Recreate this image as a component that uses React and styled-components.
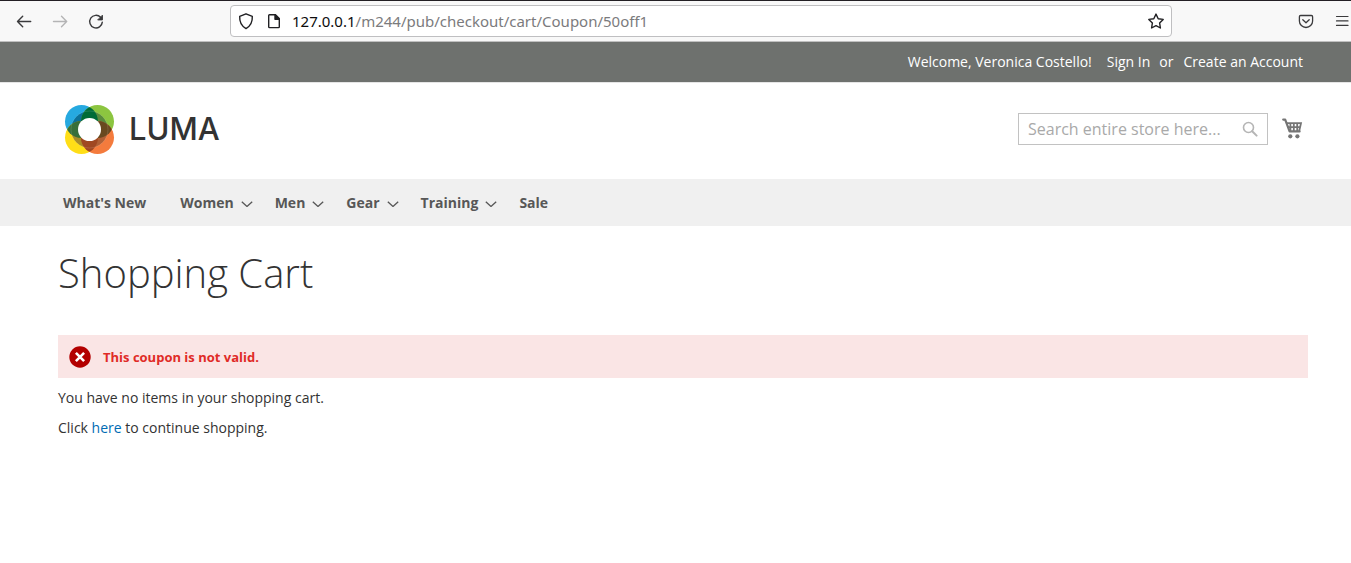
import React from 'react'
import styled, { createGlobalStyle } from 'styled-components'

const GlobalStyle = createGlobalStyle`
  * {
    box-sizing: border-box;
  }

  body {
    margin: 0;
    background: #ffffff;
    color: #333333;
    font-family: 'Open Sans', 'Noto Sans', sans-serif;
    font-size: 14px;
    line-height: 20px;
  }
`

const Toolbar = styled.header`
  display: flex;
  align-items: center;
  height: 42px;
  padding: 0 0 0 14px;
  background: #f8f8f8;
  border-top: 1px solid #231f24;
  border-bottom: 1px solid #c0c0c0;
`

const ToolbarGroup = styled.div`
  display: flex;
  gap: 16px;
  width: ${props => props.$width};
  justify-content: ${props => props.$end ? 'flex-end' : 'flex-start'};
`

const IconButton = styled.button`
  display: flex;
  flex: none;
  padding: 0;
  border: 0;
  background: none;
  color: ${props => props.$color || '#3a3a3c'};
  cursor: pointer;
`

const AddressBar = styled.div`
  display: flex;
  flex: 1;
  align-items: center;
  gap: 8px;
  height: 32px;
  padding: 0 5px;
  background: #ffffff;
  border: 1px solid #bfbfc1;
  border-radius: 4px;
  color: #202023;
`

const Address = styled.div`
  flex: 1;
  color: #7b7b7d;
  font-family: 'Noto Sans', sans-serif;
  font-size: 15px;
  white-space: nowrap;
  outline: none;
`

const Host = styled.span`
  color: #0c0c0d;
`

const Panel = styled.div`
  display: flex;
  justify-content: flex-end;
  height: 41px;
  padding: 10px 48px 0 58px;
  background: #6e716e;
  border-bottom: 1px solid #e5e5e5;
  color: #ffffff;
`

const PanelLink = styled.a`
  margin-left: ${props => props.$gap};
  color: #ffffff;
  text-decoration: none;
`

const PanelText = styled.span`
  margin-left: 9px;
`

const StoreHeader = styled.div`
  display: flex;
  align-items: center;
  justify-content: space-between;
  height: 96px;
  padding: 0 48px 4px 64px;
`

const Logo = styled.a`
  display: flex;
  align-items: center;
  gap: 14px;
  color: #333333;
  font-family: Inter, sans-serif;
  font-size: 31px;
  font-weight: 500;
  line-height: 50px;
  text-decoration: none;
`

const HeaderTools = styled.div`
  display: flex;
  align-items: center;
  gap: 13px;
`

const Search = styled.form`
  display: flex;
  align-items: center;
  width: 250px;
  height: 32px;
  padding: 0 9px;
  border: 1px solid #c2c2c2;
`

const SearchInput = styled.input`
  flex: 1;
  min-width: 0;
  padding: 0;
  border: 0;
  outline: 0;
  background: none;
  color: #333333;
  font-family: inherit;
  font-size: 16px;

  &::placeholder {
    color: #a9a9a9;
    opacity: 1;
  }
`

const Nav = styled.nav`
  display: flex;
  align-items: center;
  gap: 22px;
  height: 47px;
  padding: 0 58px 0 63px;
  background: #f0f0f0;
`

const NavLink = styled.a`
  display: flex;
  align-items: center;
  gap: 7px;
  padding-right: ${props => props.$spaced ? '12px' : '0'};
  color: #575757;
  font-weight: 700;
  text-decoration: none;
`

const Main = styled.main`
  padding: 19px 43px 40px 58px;
`

const Title = styled.h1`
  margin: 0 0 35px;
  font-size: 40px;
  font-weight: 300;
  line-height: 55px;
`

const Message = styled.div`
  display: flex;
  align-items: center;
  gap: 12px;
  min-height: 43px;
  margin-bottom: 10px;
  padding: 0 11px;
  background: #fae5e5;
  color: #e02b27;
  font-size: 13px;
  font-weight: 700;
  line-height: 18px;
`

const Paragraph = styled.p`
  margin: 0 0 10px;
`

const Link = styled.a`
  color: #006bb4;
  text-decoration: none;
`

const categories = [
  { title: "What's New" },
  { title: 'Women', menu: true },
  { title: 'Men', menu: true },
  { title: 'Gear', menu: true },
  { title: 'Training', menu: true },
  { title: 'Sale' },
]

// 20px line icon shared by the browser toolbar
const Icon = ({ children, size = 20 }) => (
  <svg
    width={size}
    height={size}
    viewBox="0 0 20 20"
    fill="none"
    stroke="currentColor"
    strokeWidth="1.4"
    strokeLinecap="round"
    strokeLinejoin="round"
    aria-hidden="true">
    {children}
  </svg>
)

const LumaMark = () => (
  <svg width="51" height="51" viewBox="0 0 51 51" aria-hidden="true">
    <defs>
      <clipPath id="blue"><circle cx="17.5" cy="17.5" r="16.5" /></clipPath>
      <clipPath id="green"><circle cx="33.5" cy="17.5" r="16.5" /></clipPath>
      <clipPath id="yellow"><circle cx="17.5" cy="33.5" r="16.5" /></clipPath>
      <clipPath id="orange"><circle cx="33.5" cy="33.5" r="16.5" /></clipPath>
    </defs>
    <circle cx="17.5" cy="17.5" r="16.5" fill="#26a9e0" />
    <circle cx="33.5" cy="17.5" r="16.5" fill="#8cc540" />
    <circle cx="17.5" cy="33.5" r="16.5" fill="#ffde17" />
    <circle cx="33.5" cy="33.5" r="16.5" fill="#f47b3d" />
    <circle cx="25.5" cy="25.5" r="18.5" fill="#0b7199" clipPath="url(#blue)" />
    <circle cx="25.5" cy="25.5" r="18.5" fill="#588b3c" clipPath="url(#green)" />
    <circle cx="25.5" cy="25.5" r="18.5" fill="#a98d2a" clipPath="url(#yellow)" />
    <circle cx="25.5" cy="25.5" r="18.5" fill="#b06036" clipPath="url(#orange)" />
    <circle cx="33.5" cy="17.5" r="16.5" fill="#006b37" clipPath="url(#blue)" />
    <circle cx="17.5" cy="33.5" r="16.5" fill="#376f3a" clipPath="url(#blue)" />
    <circle cx="33.5" cy="33.5" r="16.5" fill="#69491f" clipPath="url(#green)" />
    <circle cx="33.5" cy="33.5" r="16.5" fill="#a04822" clipPath="url(#yellow)" />
    <circle cx="25.5" cy="25.5" r="18.5" fill="none" stroke="#ffffff" strokeOpacity="0.25" strokeWidth="0.5" />
    <circle cx="25.5" cy="25.5" r="11.5" fill="#ffffff" />
  </svg>
)

const SearchIcon = () => (
  <svg width="16" height="16" viewBox="0 0 16 16" fill="none" stroke="#b5b5b5" aria-hidden="true">
    <circle cx="6.5" cy="6.5" r="5" strokeWidth="1.6" />
    <path d="M10.2 10.2 14.6 14.6" strokeWidth="2" strokeLinecap="round" />
  </svg>
)

const CartIcon = () => (
  <svg width="22" height="24" viewBox="0 0 22 24" fill="none" stroke="#757575" aria-hidden="true">
    <path d="M2.2 2.6H4.2L8.6 14.4H18.6" strokeWidth="2.2" strokeLinecap="round" strokeLinejoin="round" />
    <path d="M5 6.2H20L18.2 14M6 10.2H19.2M9.4 6V14M12.8 6V14M16.2 6V14" strokeWidth="1.8" />
    <circle cx="9.3" cy="19.3" r="2.1" fill="#757575" stroke="none" />
    <circle cx="16.4" cy="19.3" r="2.1" fill="#757575" stroke="none" />
  </svg>
)

const Chevron = () => (
  <svg width="12" height="8" viewBox="0 0 12 8" fill="none" stroke="#575757" aria-hidden="true">
    <path d="M.8 2.7 6 7.5 11.2 2.7" strokeWidth="1.3" />
  </svg>
)

const ErrorIcon = () => (
  <svg width="22" height="22" viewBox="0 0 22 22" aria-hidden="true">
    <circle cx="11" cy="11" r="10.7" fill="#b30000" />
    <path d="M6.9 6.9 15.1 15.1M15.1 6.9 6.9 15.1" stroke="#ffffff" strokeWidth="2.6" />
  </svg>
)

const BrowserToolbar = () => (
  <Toolbar>
    <ToolbarGroup $width="216px">
      <IconButton aria-label="Back">
        <Icon><path d="M16.7 10.5H3.5M8.7 5.3 3.5 10.5 8.7 15.7" /></Icon>
      </IconButton>
      <IconButton aria-label="Forward" $color="#b4b4b5">
        <Icon><path d="M3.5 10.5H16.7M11.5 5.3 16.7 10.5 11.5 15.7" /></Icon>
      </IconButton>
      <IconButton aria-label="Reload">
        <Icon>
          <path d="M14.6 6.3A6.3 6.3 0 1 0 16.3 11.1" />
          <path d="M16.4 4.6V8.9H12.1Z" fill="currentColor" strokeWidth="1" />
        </Icon>
      </IconButton>
    </ToolbarGroup>
    <AddressBar>
      <Icon>
        <path d="M10 2.8 16.3 5.4C16.6 10.5 14.6 15 10 17.6 5.4 15 3.4 10.5 3.7 5.4Z" />
      </Icon>
      <Icon>
        <path d="M5.5 3.8H11.5L15.3 7.6V15.8A.8.8 0 0 1 14.5 16.6H5.5A.8.8 0 0 1 4.7 15.8V4.6A.8.8 0 0 1 5.5 3.8Z" />
        <path d="M11 3.8V8.2H15.3Z" fill="currentColor" />
      </Icon>
      <Address role="textbox" aria-label="Address" tabIndex={0}>
        <Host>127.0.0.1</Host>/m244/pub/checkout/cart/Coupon/50off1
      </Address>
      <IconButton aria-label="Bookmark this page" $color="#202023">
        <Icon>
          <path d="M10 3.1 12.2 7.7 17.2 8.4 13.6 11.9 14.4 17 10 14.6 5.6 17 6.4 11.9 2.8 8.4 7.8 7.7Z" />
        </Icon>
      </IconButton>
    </AddressBar>
    <ToolbarGroup $width="179px" $end>
      <IconButton aria-label="Save to Pocket">
        <Icon>
          <path d="M5.6 4.5H16.4A1.2 1.2 0 0 1 17.6 5.7V9.9A6.6 6.6 0 0 1 4.4 9.9V5.7A1.2 1.2 0 0 1 5.6 4.5ZM7.8 8.7 11 11.7 14.2 8.7" strokeWidth="1.3" />
        </Icon>
      </IconButton>
      <IconButton aria-label="Open menu">
        <Icon><path d="M5.5 5.5H17M5.5 9.9H17M5.5 14.4H17" strokeWidth="1.2" /></Icon>
      </IconButton>
    </ToolbarGroup>
  </Toolbar>
)

const App = () => (
  <>
    <GlobalStyle />
    <BrowserToolbar />

    <Panel>
      <span>Welcome, Veronica Costello!</span>
      <PanelLink href="#signin" $gap="15px">Sign In</PanelLink>
      <PanelText>or</PanelText>
      <PanelLink href="#create" $gap="10px">Create an Account</PanelLink>
    </Panel>

    <StoreHeader>
      <Logo href="#home">
        <LumaMark />
        LUMA
      </Logo>
      <HeaderTools>
        <Search role="search">
          <SearchInput aria-label="Search" placeholder="Search entire store here..." />
          <IconButton type="submit" aria-label="Search">
            <SearchIcon />
          </IconButton>
        </Search>
        <IconButton aria-label="My Cart">
          <CartIcon />
        </IconButton>
      </HeaderTools>
    </StoreHeader>

    <Nav>
      {categories.map((category, index) => (
        <NavLink key={category.title} href="#category" $spaced={index === 0}>
          {category.title}
          {category.menu && <Chevron />}
        </NavLink>
      ))}
    </Nav>

    <Main>
      <Title>Shopping Cart</Title>
      <Message role="alert">
        <ErrorIcon />
        This coupon is not valid.
      </Message>
      <Paragraph>You have no items in your shopping cart.</Paragraph>
      <Paragraph>
        Click <Link href="#home">here</Link> to continue shopping.
      </Paragraph>
    </Main>
  </>
)

export default App
